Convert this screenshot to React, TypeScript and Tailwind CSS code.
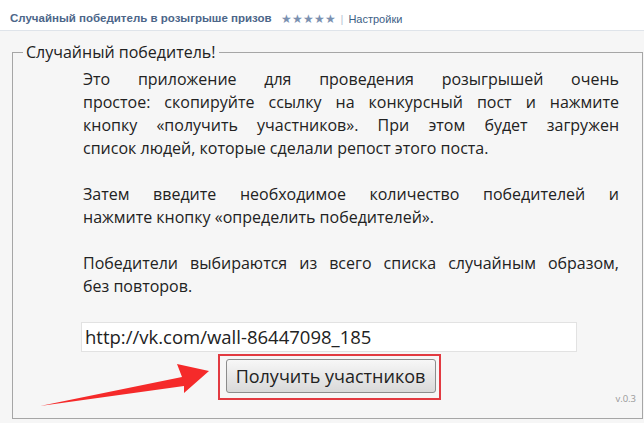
const J = "block text-justify [text-align-last:justify]";

export default function App() {
  return (
    <div className="relative w-[644px] h-[423px] overflow-hidden bg-[#f6f6f6] font-['Open_Sans',sans-serif] text-[#222]">
      <div className="h-[31px] bg-white border-b border-[#dfe4ea] flex items-center pl-[10px] pt-[8px] font-['Liberation_Sans',sans-serif] text-[11px]">
        <span className="font-bold text-[11.5px] text-[#4c6689]">Случайный победитель в розыгрыше призов</span>
        <span className="ml-[9px] text-[#7a90b0] text-[12px] leading-none">★★★★★</span>
        <span className="ml-[5px] text-[#b7c4d3]">|</span>
        <span className="ml-[5px] text-[#3c6086]">Настройки</span>
      </div>
      <fieldset className="ml-[12px] mt-[10px] w-[631px] h-[378px] border border-[#a6a6a6] px-[10px]">
        <legend className="px-[3px] text-[16px] leading-[23px]">Случайный победитель!</legend>
        <div className="ml-[60px] mr-[13px] mt-[4px] text-[16px] leading-[23px]">
          <p>
            <span className={J}>Это приложение для проведения розыгрышей очень</span>
            <span className={J}>простое: скопируйте ссылку на конкурсный пост и нажмите</span>
            <span className={J}>кнопку «получить участников». При этом будет загружен</span>
            <span className="block">список людей, которые сделали репост этого поста.</span>
          </p>
          <p className="mt-[23px]">
            <span className={J}>Затем введите необходимое количество победителей и</span>
            <span className="block">нажмите кнопку «определить победителей».</span>
          </p>
          <p className="mt-[23px]">
            <span className={J}>Победители выбираются из всего списка случайным образом,</span>
            <span className="block">без повторов.</span>
          </p>
        </div>
        <div className="ml-[58px] w-[496px] mt-[24px] flex flex-col items-center">
          <div className="w-full h-[30px] bg-white border border-[#e2e2e2] flex items-center pl-[3px] text-[18.5px]">
            http://vk.com/wall-86447098_185
          </div>
          <div className="mt-[2px] border-2 border-[#e23a41] pl-[6px] pr-[3px] pt-[3px] pb-[5px]">
            <button className="w-[210px] h-[34px] rounded-[3px] border border-[#8c8c8c] bg-gradient-to-b from-[#f7f7f7] to-[#d9d9d9] text-[18px] text-[#222]">
              Получить участников
            </button>
          </div>
        </div>
        <div className="flex justify-end mr-[-4px] mt-[-8px] text-[9.5px] text-[#999]">v.0.3</div>
      </fieldset>
      <svg className="absolute left-0 top-0" width="644" height="423" viewBox="0 0 644 423">
        <polygon points="40,406 182,377 177,364 209,371 184,393 184,386" fill="#f52a2a" />
      </svg>
    </div>
  );
}
